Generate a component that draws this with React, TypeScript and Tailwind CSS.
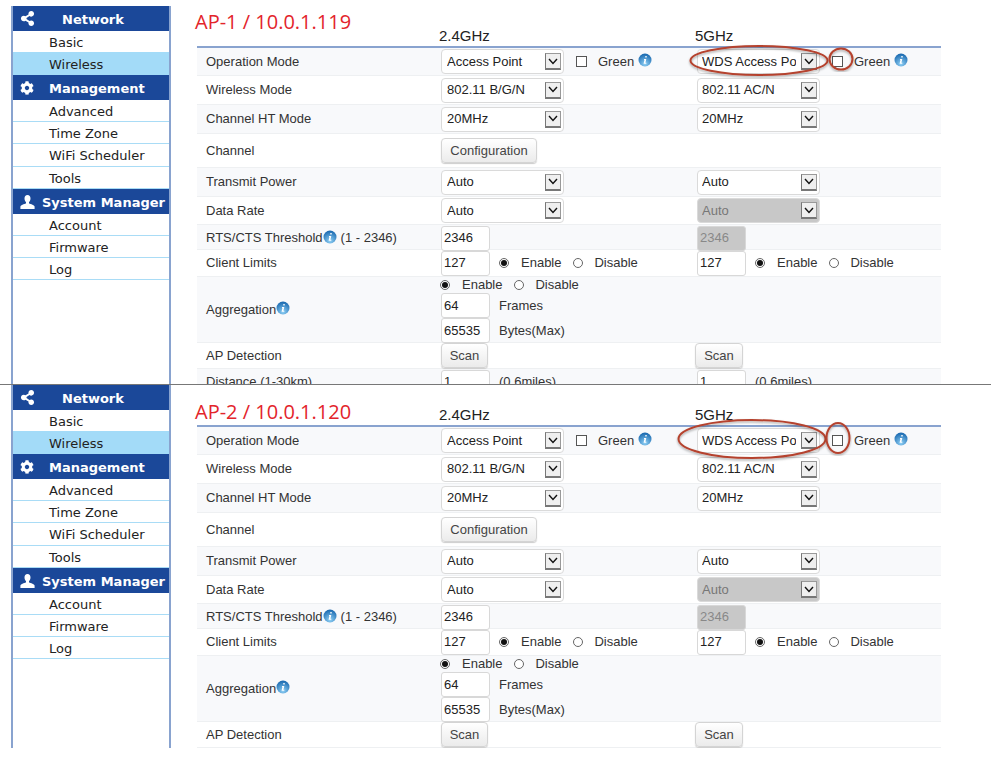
import { FaShareAlt, FaCog } from 'react-icons/fa';

const Info = () => (
  <svg width="14" height="14" viewBox="0 0 14 14" className="shrink-0">
    <defs>
      <radialGradient id="infoFill" cx="0.5" cy="0.8" r="0.8">
        <stop offset="0" stopColor="#8fd0f5" />
        <stop offset="1" stopColor="#1565ad" />
      </radialGradient>
    </defs>
    <circle cx="7" cy="7" r="6.5" fill="url(#infoFill)" />
    <path d="M7.3 3h1.4v1.5H7.3zM6 6h2.3l-.9 3.8h.9v.9H5.6l.8-3.8H6z" fill="#fff" />
  </svg>
);

const UserIcon = () => (
  <svg width="15" height="14" viewBox="0 0 15 14" fill="#fff">
    <path d="M7.5 0C9.4 0 10.5 1.4 10.5 3.4c0 1.5-.6 2.9-1.5 3.7v1.2c0 .6 4.8 1.2 5.6 3.2V14H.4v-2.5c.8-2 5.6-2.6 5.6-3.2V7.1C5.100 6.300 4.500 4.900 4.500 3.400 4.500 1.400 5.600 0 7.500 0z" />
  </svg>
);

function Select({ value, disabled, right }: { value: string; disabled?: boolean; right?: boolean }) {
  return (
    <div className={`flex items-center w-[123px] h-[25px] rounded-[4px] border border-[#dadada] pr-[2px] ${right ? 'pl-[4px]' : 'pl-[5px]'} ${disabled ? 'bg-[#c8c8c8] text-[#777]' : 'bg-white text-[#222]'}`}>
      <span className="flex-1 mr-[5px] whitespace-nowrap overflow-hidden">{value}</span>
      <span className="flex items-center justify-center w-[16px] h-[17px] bg-[#efefef] border border-[#777] border-r-[#999] border-t-[#999] border-b-2 shrink-0">
        <svg width="10" height="7" viewBox="0 0 10 7" fill="none" stroke="#111" strokeWidth="1.4">
          <path d="M1 1l4 4.500L9 1" />
        </svg>
      </span>
    </div>
  );
}

function Input({ value, disabled }: { value: string; disabled?: boolean }) {
  return (
    <div className={`flex items-center w-[49px] h-[25px] rounded-[3px] border border-[#d8d8d8] pl-[2px] shrink-0 ${disabled ? 'bg-[#c8c8c8] text-[#888]' : 'bg-white text-[#222]'}`}>
      {value}
    </div>
  );
}

const Button = ({ label, className }: { label: string; className: string }) => (
  <button className={`h-[25px] rounded-[4px] border border-[#d4d4d4] bg-gradient-to-b from-white to-[#ebebeb] text-[#444] shadow-[0_1px_1px_#ccc] ${className}`}>
    {label}
  </button>
);

const Radio = ({ on }: { on?: boolean }) => (
  <span className="flex items-center justify-center w-[10px] h-[10px] rounded-full border border-[#666] bg-white shrink-0">
    {on && <span className="w-[6px] h-[6px] rounded-full bg-[#111]" />}
  </span>
);

const Check = () => <span className="w-[11px] h-[11px] border border-[#555] bg-white shrink-0" />;

const Green = () => (
  <div className="flex items-center">
    <Check />
    <span className="ml-[11px]">Green</span>
    <span className="ml-[4px] -mt-[4px]"><Info /></span>
  </div>
);

const EnableDisable = () => (
  <div className="flex items-center">
    <Radio on />
    <span className="ml-[12px]">Enable</span>
    <span className="ml-[12px]"><Radio /></span>
    <span className="ml-[11px]">Disable</span>
  </div>
);

function Row({ h, label, a, b, shaded }: { h: string; label: React.ReactNode; a?: React.ReactNode; b?: React.ReactNode; shaded?: boolean }) {
  return (
    <div className={`flex items-center border-b border-[#eef0f2] shrink-0 ${h} ${shaded ? 'bg-[#f8f9fb]' : 'bg-white'}`}>
      <div className="w-[244px] pl-[9px] flex items-center whitespace-nowrap">{label}</div>
      <div className="w-[256px] flex items-center">{a}</div>
      <div className="flex items-center">{b}</div>
    </div>
  );
}

function Table() {
  return (
    <div className="border-t-2 border-[#89a3cf] font-['Liberation_Sans',sans-serif] text-[13px] text-[#333]">
      <Row h="h-[28px]" shaded label="Operation Mode"
        a={<><Select value="Access Point" /><span className="ml-[12px]"><Green /></span></>}
        b={<><Select right value="WDS Access Point" /><span className="ml-[12px]"><Green /></span></>} />
      <Row h="h-[29px]" label="Wireless Mode" a={<Select value="802.11 B/G/N" />} b={<Select right value="802.11 AC/N" />} />
      <Row h="h-[29px]" shaded label="Channel HT Mode" a={<Select value="20MHz" />} b={<Select right value="20MHz" />} />
      <Row h="h-[34px]" label="Channel" a={<Button label="Configuration" className="w-[96px]" />} />
      <Row h="h-[29px]" shaded label="Transmit Power" a={<Select value="Auto" />} b={<Select right value="Auto" />} />
      <Row h="h-[28px]" label="Data Rate" a={<Select value="Auto" />} b={<Select right value="Auto" disabled />} />
      <Row h="h-[25px] pt-[2px]" shaded
        label={<>RTS/CTS Threshold<span className="-mt-[3px]"><Info /></span><span className="ml-[4px]">(1 - 2346)</span></>}
        a={<Input value="2346" />} b={<Input value="2346" disabled />} />
      <Row h="h-[27px]" label="Client Limits"
        a={<><Input value="127" /><span className="ml-[9px]"><EnableDisable /></span></>}
        b={<><Input value="127" /><span className="ml-[9px]"><EnableDisable /></span></>} />
      <Row h="h-[66px]" shaded
        label={<>Aggregation<span className="-mt-[3px]"><Info /></span></>}
        a={
          <div className="flex flex-col">
            <div className="h-[17px] -ml-[1px] flex items-center"><EnableDisable /></div>
            <div className="flex items-center"><Input value="64" /><span className="ml-[9px]">Frames</span></div>
            <div className="flex items-center"><Input value="65535" /><span className="ml-[9px]">Bytes(Max)</span></div>
          </div>
        } />
      <Row h="h-[26px]" label="AP Detection" a={<Button label="Scan" className="w-[47px]" />} b={<Button label="Scan" className="w-[48px] -ml-[2px]" />} />
      <Row h="h-[27px]" shaded label="Distance (1-30km)"
        a={<><Input value="1" /><span className="ml-[9px]">(0.6miles)</span></>}
        b={<><Input value="1" /><span className="ml-[9px]">(0.6miles)</span></>} />
    </div>
  );
}

function SideHead({ icon, label, offset }: { icon: React.ReactNode; label: string; offset: string }) {
  return (
    <div className="flex items-center bg-[#1b4899] text-white font-bold h-[25px]">
      <span className="w-[28px] flex justify-center shrink-0">{icon}</span>
      <span className={`whitespace-nowrap pt-[2px] ${offset}`}>{label}</span>
    </div>
  );
}

function SideItem({ label, h = 'h-[22px]', active, plain }: { label: string; h?: string; active?: boolean; plain?: boolean }) {
  return (
    <div className={`flex items-center pl-[36px] pt-[2px] text-[#222] ${h} ${active ? 'bg-[#a3dbf8]' : 'bg-white'} ${plain || active ? '' : 'border-b border-[#a9dcf6]'}`}>
      {label}
    </div>
  );
}

function Sidebar() {
  return (
    <div className="w-[160px] ml-[11px] shrink-0 border-x-2 border-[#89a3cf] font-['DejaVu_Sans',sans-serif] text-[13px]">
      <SideHead offset="ml-[21px]" icon={<FaShareAlt size={15} />} label="Network" />
      <SideItem plain h="h-[21px]" label="Basic" />
      <SideItem active h="h-[23px]" label="Wireless" />
      <SideHead offset="ml-[8px]" icon={<FaCog size={14} />} label="Management" />
      <SideItem label="Advanced" />
      <SideItem label="Time Zone" />
      <SideItem h="h-[23px]" label="WiFi Scheduler" />
      <SideItem label="Tools" />
      <SideHead offset="ml-[1px]" icon={<UserIcon />} label="System Manager" />
      <SideItem label="Account" />
      <SideItem label="Firmware" />
      <SideItem label="Log" />
    </div>
  );
}

function Panel({ title, low, className, ovals }: { title: string; low?: boolean; className: string; ovals: React.ReactNode }) {
  return (
    <div className={`relative flex overflow-hidden ${className}`}>
      <Sidebar />
      <div className="ml-[26px] w-[744px] shrink-0">
        <div className="relative flex items-end h-[40px] font-['Liberation_Sans',sans-serif] text-[15px] leading-[20px] text-[#222]">
          <div className={`absolute -left-[2px] font-['Open_Sans',sans-serif] text-[20px] leading-[24px] text-[#e3242b] ${low ? 'top-[15px]' : 'top-[4px]'}`}>{title}</div>
          <span className="ml-[242px] w-[256px]">2.4GHz</span>
          <span>5GHz</span>
        </div>
        <Table />
      </div>
      {ovals}
    </div>
  );
}

function Ovals({ a, b }: { a: string; b: string }) {
  return (
    <svg className="absolute left-0 top-0 pointer-events-none" width="991" height="100" fill="none" stroke="#b5432f" strokeWidth="2">
      <defs>
        <filter id="ovalShadow"><feDropShadow dx="0" dy="1.5" stdDeviation="1" floodColor="#000" floodOpacity="0.35" /></filter>
      </defs>
      <path d={a} filter="url(#ovalShadow)" />
      <path d={b} filter="url(#ovalShadow)" />
    </svg>
  );
}

// ellipse as a path so each one can be placed by its centre and radii
const ell = (cx: number, cy: number, rx: number, ry: number) =>
  `M${cx - rx} ${cy}a${rx} ${ry} 0 1 0 ${rx * 2} 0a${rx} ${ry} 0 1 0 ${-rx * 2} 0`;

export default function App() {
  return (
    <div className="w-[991px] h-[757px] bg-white overflow-hidden">
      <Panel title="AP-1 / 10.0.1.119" className="h-[384px] pt-[6px]"
        ovals={<Ovals a={ell(759, 60.5, 68.5, 14.5)} b={ell(841, 59, 11.5, 10.5)} />} />
      <div className="h-px bg-[#777]" />
      <Panel low title="AP-2 / 10.0.1.120" className="h-[363px]"
        ovals={<Ovals a={ell(752, 54, 73.5, 19)} b={ell(838, 53, 11.5, 15)} />} />
    </div>
  );
}
